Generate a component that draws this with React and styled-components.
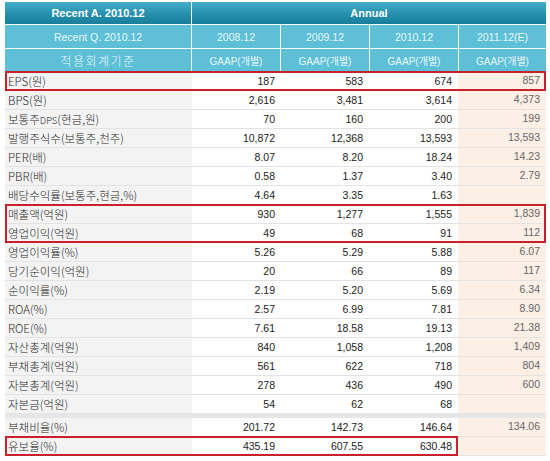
import React from 'react';
import styled, { createGlobalStyle, css } from 'styled-components';

const GlobalStyle = createGlobalStyle`
  html, body {
    margin: 0;
    background: #ffffff;
  }
  body {
    padding: 2px 4px 0 5px;
    font-family: 'Liberation Sans', 'Noto Sans CJK KR', sans-serif;
  }
`;

const Table = styled.div`
  width: 541px;
  display: flex;
  flex-direction: column;
`;

const HeadRow = styled.div`
  display: grid;
  grid-template-columns: ${({ split }) => (split ? '186px 1fr' : '186px 88px 88px 88px 87px')};
  column-gap: 1px;
  height: ${({ h }) => h}px;
  margin-bottom: 1px;
  background: #ffffff;
`;

const HeadCell = styled.div`
  display: flex;
  align-items: center;
  justify-content: center;
  background: ${({ dark }) => (dark ? 'linear-gradient(#45aecb, #2590ad 55%, #177e9a)' : '#5ec0d7')};
  color: ${({ dark }) => (dark ? '#ffffff' : '#e8f7fb')};
  font-weight: ${({ dark }) => (dark ? 700 : 400)};
  font-size: ${({ dark }) => (dark ? 11 : 10.5)}px;
  white-space: nowrap;
`;

const KrHead = styled.span`
  font-family: 'Noto Sans CJK KR', sans-serif;
  font-size: 12px;
  font-weight: 300;
  letter-spacing: 1.5px;
  color: #e8f7fb;
`;

const Gaap = styled.span`
  font-size: 10px;
  font-family: 'Liberation Sans', 'Noto Sans CJK KR', sans-serif;
`;

const Group = styled.div`
  position: relative;
  &::after {
    content: '';
    position: absolute;
    left: 0;
    top: -1px;
    bottom: 0;
    right: ${({ cut }) => cut || 0}px;
    border: 2px solid #c9212b;
    pointer-events: none;
  }
`;

const Row = styled.div`
  display: grid;
  grid-template-columns: 187px 89px 88px 89px 88px;
  height: 19px;
  box-sizing: border-box;
  border-bottom: 1px solid #e3e3e3;
`;

const Label = styled.div`
  background: #f3f3f3;
  padding-left: 3px;
  font-family: 'Noto Sans CJK KR', sans-serif;
  font-size: 11.5px;
  font-weight: 300;
  line-height: 18px;
  color: #2a2a2a;
  white-space: nowrap;
  overflow: hidden;
`;

const Small = styled.span`
  font-size: 9.5px;
`;

const Num = styled.div`
  text-align: right;
  padding-right: 6px;
  font-size: 10.5px;
  line-height: 18px;
  color: #222222;
  ${({ est }) =>
    est &&
    css`
      background: #fcefe6;
      color: #666666;
      line-height: 16px;
    `}
`;

const Spacer = styled.div`
  height: 4px;
  background: #e6e6e6;
`;

const rows = [
  ['EPS(원)', '187', '583', '674', '857'],
  ['BPS(원)', '2,616', '3,481', '3,614', '4,373'],
  ['보통주|DPS|(현금,원)', '70', '160', '200', '199'],
  ['발행주식수(보통주,천주)', '10,872', '12,368', '13,593', '13,593'],
  ['PER(배)', '8.07', '8.20', '18.24', '14.23'],
  ['PBR(배)', '0.58', '1.37', '3.40', '2.79'],
  ['배당수익률(보통주,현금,%)', '4.64', '3.35', '1.63', ''],
  ['매출액(억원)', '930', '1,277', '1,555', '1,839'],
  ['영업이익(억원)', '49', '68', '91', '112'],
  ['영업이익률(%)', '5.26', '5.29', '5.88', '6.07'],
  ['당기순이익(억원)', '20', '66', '89', '117'],
  ['순이익률(%)', '2.19', '5.20', '5.69', '6.34'],
  ['ROA(%)', '2.57', '6.99', '7.81', '8.90'],
  ['ROE(%)', '7.61', '18.58', '19.13', '21.38'],
  ['자산총계(억원)', '840', '1,058', '1,208', '1,409'],
  ['부채총계(억원)', '561', '622', '718', '804'],
  ['자본총계(억원)', '278', '436', '490', '600'],
  ['자본금(억원)', '54', '62', '68', ''],
  ['부채비율(%)', '201.72', '142.73', '146.64', '134.06'],
  ['유보율(%)', '435.19', '607.55', '630.48', ''],
];

function LabelText({ text }) {
  const parts = text.split('|');
  if (parts.length === 1) return text;
  return (
    <>
      {parts[0]}
      <Small>{parts[1]}</Small>
      {parts[2]}
    </>
  );
}

function DataRow({ row }) {
  const [label, a, b, c, e] = row;
  return (
    <Row>
      <Label>
        <LabelText text={label} />
      </Label>
      <Num>{a}</Num>
      <Num>{b}</Num>
      <Num>{c}</Num>
      <Num est>{e}</Num>
    </Row>
  );
}

const years = ['2008.12', '2009.12', '2010.12', '2011.12(E)'];

export default function App() {
  return (
    <>
      <GlobalStyle />
      <Table>
        <HeadRow split h={22}>
          <HeadCell dark>Recent A. 2010.12</HeadCell>
          <HeadCell dark>Annual</HeadCell>
        </HeadRow>
        <HeadRow h={23}>
          <HeadCell>Recent Q. 2010.12</HeadCell>
          {years.map((y) => (
            <HeadCell key={y}>{y}</HeadCell>
          ))}
        </HeadRow>
        <HeadRow h={22}>
          <HeadCell>
            <KrHead>적용회계기준</KrHead>
          </HeadCell>
          {years.map((y) => (
            <HeadCell key={y}>
              <Gaap>GAAP(개별)</Gaap>
            </HeadCell>
          ))}
        </HeadRow>

        <Group>
          <DataRow row={rows[0]} />
        </Group>
        {rows.slice(1, 7).map((r) => (
          <DataRow key={r[0]} row={r} />
        ))}
        <Group>
          <DataRow row={rows[7]} />
          <DataRow row={rows[8]} />
        </Group>
        {rows.slice(9, 18).map((r) => (
          <DataRow key={r[0]} row={r} />
        ))}
        <Spacer />
        <DataRow row={rows[18]} />
        <Group cut={88}>
          <DataRow row={rows[19]} />
        </Group>
      </Table>
    </>
  );
}
